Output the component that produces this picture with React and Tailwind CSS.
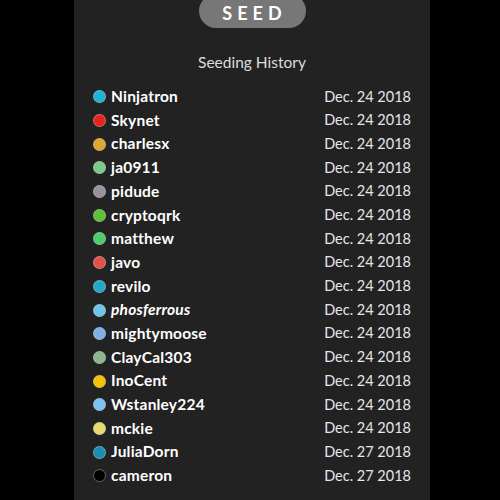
import React from "react";

const rows = [
  ["Ninjatron", "#1fb4d8", "Dec. 24 2018"],
  ["Skynet", "#e6231c", "Dec. 24 2018"],
  ["charlesx", "#dca92b", "Dec. 24 2018"],
  ["ja0911", "#7dc98b", "Dec. 24 2018"],
  ["pidude", "#9a919e", "Dec. 24 2018"],
  ["cryptoqrk", "#5fbf36", "Dec. 24 2018"],
  ["matthew", "#4ccd67", "Dec. 24 2018"],
  ["javo", "#e5504a", "Dec. 24 2018"],
  ["revilo", "#21a8c8", "Dec. 24 2018"],
  ["phosferrous", "#6dc6e8", "Dec. 24 2018", true],
  ["mightymoose", "#7cb2e6", "Dec. 24 2018"],
  ["ClayCal303", "#8db68a", "Dec. 24 2018"],
  ["InoCent", "#f6c300", "Dec. 24 2018"],
  ["Wstanley224", "#7bc2f1", "Dec. 24 2018"],
  ["mckie", "#e9dc6e", "Dec. 24 2018"],
  ["JuliaDorn", "#198db2", "Dec. 27 2018"],
  ["cameron", "#000000", "Dec. 27 2018"],
];

export default function App() {
  return (
    <div className="w-[500px] h-[500px] bg-black overflow-hidden" style={{ fontFamily: "Lato, 'Noto Sans', sans-serif" }}>
      <div className="ml-[74px] w-[356px] h-[500px] bg-[#222222] flex flex-col items-center">
        <div className="mt-[-6px] w-[107px] h-[34px] rounded-full bg-[#777777] flex items-center justify-center pt-[4px]">
          <span className="text-white font-bold text-[18px] tracking-[0.28em] pl-[0.28em] leading-none">SEED</span>
        </div>
        <div className="mt-[24px] text-[#dddddd] text-[15.5px] leading-[20px]">Seeding History</div>
        <div className="mt-[13px] w-full pl-[19px] pr-[19px] flex flex-col">
          {rows.map(([name, color, date, italic]) => (
            <div key={name} className="h-[23.7px] flex items-center justify-between">
              <div className="flex items-center gap-[5px]">
                <span
                  className="w-[13px] h-[13px] rounded-full border border-[#bbbbbb]/50"
                  style={{ backgroundColor: color }}
                />
                <span className={"text-white font-bold text-[15.5px] tracking-[0.2px] leading-none" + (italic ? " italic" : "")}>{name}</span>
              </div>
              <span className="text-[#e6e6e6] text-[14.5px] leading-none">{date}</span>
            </div>
          ))}
        </div>
      </div>
    </div>
  );
}
